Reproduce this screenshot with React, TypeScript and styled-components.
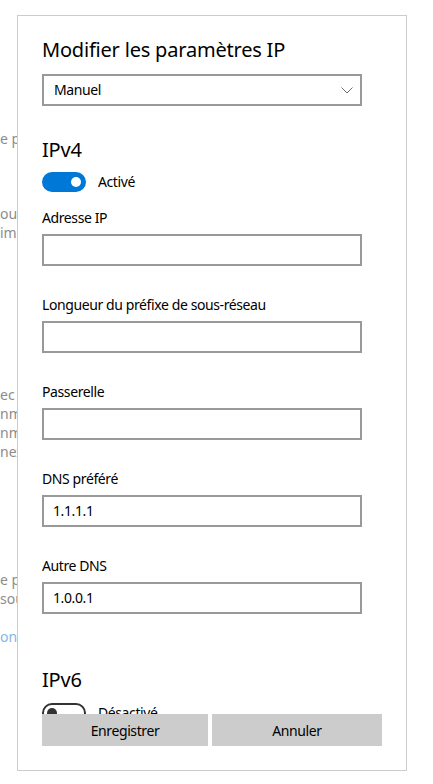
import styled, { createGlobalStyle } from 'styled-components';

const GlobalStyle = createGlobalStyle`
  html, body {
    margin: 0;
    padding: 0;
    background: #ffffff;
  }

  body {
    font-family: 'Noto Sans', 'Open Sans', sans-serif;
    font-size: 14px;
    color: #000000;
    letter-spacing: -0.4px;
  }

  * {
    box-sizing: border-box;
  }
`;

const Page = styled.div`
  position: relative;
  width: 433px;
  height: 784px;
  overflow: hidden;
  background: #ffffff;
`;

/* Settings page behind the dialog, only its left edge shows */
const Backdrop = styled.div`
  width: 17px;
  overflow: hidden;
  display: flex;
  flex-direction: column;
  padding-top: 129px;
`;

const BackGroup = styled.div<{ $gap: number }>`
  display: flex;
  flex-direction: column;
  margin-top: ${(p) => p.$gap}px;
`;

const BackLine = styled.div<{ $link?: boolean }>`
  white-space: nowrap;
  overflow: hidden;
  width: 17px;
  line-height: 19px;
  font-size: 14px;
  letter-spacing: 0;
  color: ${(p) => (p.$link ? '#86b6e4' : '#8c8c8c')};
`;

const Dialog = styled.div`
  position: absolute;
  top: 15px;
  left: 17px;
  width: 390px;
  height: 756px;
  background: #ffffff;
  border: 1px solid #cccccc;
  display: flex;
  flex-direction: column;
`;

const Body = styled.div`
  flex: 1;
  min-height: 0;
  overflow: hidden;
  padding: 20px 24px 0;
  display: flex;
  flex-direction: column;

  & > * {
    flex-shrink: 0;
  }
`;

const Title = styled.h1`
  margin: 0;
  font-size: 20px;
  font-weight: 400;
  line-height: 28px;
  letter-spacing: -0.2px;
`;

const Select = styled.div`
  margin-top: 10px;
  width: 320px;
  height: 32px;
  border: 2px solid #999999;
  display: flex;
  align-items: center;
  justify-content: space-between;
  padding: 0 7px 0 10px;
  line-height: 20px;
`;

const Section = styled.h2<{ $gap: number }>`
  margin: ${(p) => p.$gap}px 0 0;
  font-size: 20px;
  font-weight: 400;
  line-height: 28px;
  letter-spacing: -0.2px;
`;

const ToggleRow = styled.div<{ $gap: number }>`
  margin-top: ${(p) => p.$gap}px;
  display: flex;
  align-items: center;
  gap: 12px;
  line-height: 20px;
`;

const Switch = styled.div<{ $on: boolean }>`
  width: 44px;
  height: 20px;
  border-radius: 10px;
  flex-shrink: 0;
  display: flex;
  align-items: center;
  justify-content: ${(p) => (p.$on ? 'flex-end' : 'flex-start')};
  padding: 0 3px;
  background: ${(p) => (p.$on ? '#0078d7' : '#ffffff')};
  border: 2px solid ${(p) => (p.$on ? '#0078d7' : '#333333')};

  &::after {
    content: '';
    width: 10px;
    height: 10px;
    border-radius: 50%;
    background: ${(p) => (p.$on ? '#ffffff' : '#333333')};
  }
`;

const Fields = styled.div`
  margin-top: 16px;
  display: flex;
  flex-direction: column;
  gap: 29px;
`;

const Field = styled.label`
  display: flex;
  flex-direction: column;
  gap: 6px;
`;

const Label = styled.span`
  line-height: 20px;
`;

const Input = styled.div`
  width: 320px;
  height: 32px;
  border: 2px solid #999999;
  padding: 0 9px;
  display: flex;
  align-items: center;
  line-height: 20px;
`;

const Footer = styled.div`
  display: grid;
  grid-template-columns: 166px 170px;
  gap: 4px;
  padding: 0 24px 24px;
`;

const Button = styled.button`
  height: 32px;
  border: none;
  background: #cccccc;
  font-family: inherit;
  font-size: 14px;
  letter-spacing: inherit;
  color: #000000;
  padding: 0;
`;

const Chevron = () => (
  <svg width="12" height="7" viewBox="0 0 12 7" fill="none">
    <path d="M0.5 0.5 L6 6 L11.5 0.5" stroke="#707070" strokeWidth="1" />
  </svg>
);

const fields = [
  { label: 'Adresse IP', value: '' },
  { label: 'Longueur du préfixe de sous-réseau', value: '' },
  { label: 'Passerelle', value: '' },
  { label: 'DNS préféré', value: '1.1.1.1' },
  { label: 'Autre DNS', value: '1.0.0.1' }
];

const backdrop = [
  { gap: 0, lines: ['e p'] },
  { gap: 56, lines: ['ou', 'ima'] },
  { gap: 143, lines: ['ec u', 'nme', 'nme', 'nex'] },
  { gap: 109, lines: ['e p', 'sou'] },
  { gap: 19, lines: ['ons'], link: true }
];

export default function App() {
  return (
    <Page>
      <GlobalStyle />
      <Backdrop>
        {backdrop.map((group, i) => (
          <BackGroup key={i} $gap={group.gap}>
            {group.lines.map((line, j) => (
              <BackLine key={j} $link={group.link}>
                {line}
              </BackLine>
            ))}
          </BackGroup>
        ))}
      </Backdrop>

      <Dialog>
        <Body>
          <Title>Modifier les paramètres IP</Title>
          <Select>
            <span>Manuel</span>
            <Chevron />
          </Select>

          <Section $gap={30}>IPv4</Section>
          <ToggleRow $gap={8}>
            <Switch $on />
            <span>Activé</span>
          </ToggleRow>

          <Fields>
            {fields.map((f) => (
              <Field key={f.label}>
                <Label>{f.label}</Label>
                <Input>{f.value}</Input>
              </Field>
            ))}
          </Fields>

          <Section $gap={52}>IPv6</Section>
          <ToggleRow $gap={9}>
            <Switch $on={false} />
            <span>Désactivé</span>
          </ToggleRow>
        </Body>

        <Footer>
          <Button>Enregistrer</Button>
          <Button>Annuler</Button>
        </Footer>
      </Dialog>
    </Page>
  );
}
